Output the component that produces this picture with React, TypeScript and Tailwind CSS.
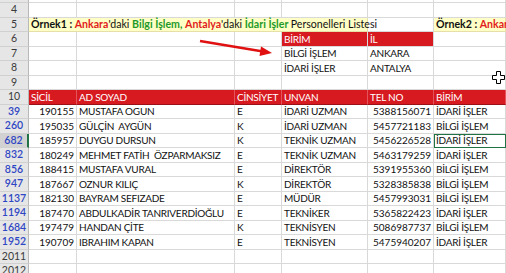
import React from 'react';

// column widths: row header, A..F
const W = ['w-[29px]', 'w-[48px]', 'w-[158px]', 'w-[47px]', 'w-[86px]', 'w-[66px]', 'w-[72px]'];

const people: [number, string, string, string, string, string, string][] = [
  [39, '190155', 'MUSTAFA OGUN', 'E', 'İDARİ UZMAN', '5388156071', 'İDARİ İŞLER'],
  [260, '195035', 'GÜLÇİN  AYGÜN', 'K', 'İDARİ UZMAN', '5457721183', 'BİLGİ İŞLEM'],
  [682, '185957', 'DUYGU DURSUN', 'K', 'TEKNİK UZMAN', '5456226528', 'İDARİ İŞLER'],
  [832, '180249', 'MEHMET FATİH  ÖZPARMAKSIZ', 'E', 'TEKNİK UZMAN', '5463179259', 'İDARİ İŞLER'],
  [856, '188415', 'MUSTAFA VURAL', 'E', 'DİREKTÖR', '5391955360', 'BİLGİ İŞLEM'],
  [947, '187667', 'OZNUR KILIÇ', 'K', 'DİREKTÖR', '5328385838', 'BİLGİ İŞLEM'],
  [1137, '182130', 'BAYRAM SEFIZADE', 'E', 'MÜDÜR', '5457993031', 'BİLGİ İŞLEM'],
  [1194, '187470', 'ABDULKADİR TANRIVERDİOĞLU', 'E', 'TEKNİKER', '5365822423', 'İDARİ İŞLER'],
  [1684, '197479', 'HANDAN ÇİTE', 'K', 'TEKNİSYEN', '5086987737', 'BİLGİ İŞLEM'],
  [1952, '190709', 'IBRAHIM KAPAN', 'E', 'TEKNİSYEN', '5475940207', 'İDARİ İŞLER'],
];

function Row({ tall, children }: { tall?: boolean; children: React.ReactNode }) {
  return <div className={`flex shrink-0 ${tall ? 'h-[15px]' : 'h-[14px]'}`}>{children}</div>;
}

function Head({ n, blue, selected }: { n?: string | number; blue?: boolean; selected?: boolean }) {
  return (
    <div
      className={`${W[0]} shrink-0 flex items-center justify-center border-b border-r box-border text-[10.5px] tracking-normal ${
        selected ? 'bg-[#d2d2d2] border-r-[#217346] border-r-2' : 'bg-[#e6e6e6] border-r-[#b8b8b8]'
      } border-b-[#d0d0d0] ${blue ? 'text-[#2f46c4] font-semibold' : 'text-[#3a3a3a]'}`}
    >
      {n}
    </div>
  );
}

function Cell({ i, children, className = '' }: { i: number; children?: React.ReactNode; className?: string }) {
  return (
    <div
      className={`${W[i]} shrink-0 flex items-center border-b border-r border-[#d9d9d9] box-border px-[2px] whitespace-pre overflow-visible ${className}`}
    >
      {children}
    </div>
  );
}

function Empty() {
  return (
    <>
      {[1, 2, 3, 4, 5, 6].map((i) => (
        <Cell key={i} i={i} />
      ))}
    </>
  );
}

export default function App() {
  return (
    <div className="relative w-[506px] h-[273px] overflow-hidden bg-white text-[10px] tracking-[-0.25px] text-[#111] font-['Lato','Liberation_Sans',sans-serif] flex flex-col">
      <div className="flex shrink-0 h-[3px]">
        <Head />
        <Empty />
      </div>
      <Row tall>
        <Head n={4} />
        <Empty />
      </Row>
      <Row>
        <Head n={5} />
        <div className="w-[339px] shrink-0 flex items-center bg-[#ffffc6] border-b border-r border-[#e6e0a8] box-border px-[2px] whitespace-pre overflow-visible z-10 text-[10.6px] tracking-normal">
          <b>Örnek1 : </b>
          <b className="text-[#e21b1b]">Ankara</b>
          <span>'daki </span>
          <b className="text-[#1f9a2a]">Bilgi İşlem, </b>
          <b className="text-[#e21b1b]">Antalya</b>
          <span>'daki </span>
          <b className="text-[#1f9a2a]">İdari İşler </b>
          <span>Personelleri Listesi</span>
        </div>
        <Cell i={5} />
        <Cell i={6} className="bg-[#ffffc6] border-[#e6e0a8] overflow-hidden text-[10.6px] tracking-normal">
          <b>Örnek2 : </b>
          <b className="text-[#e21b1b]">Ankara</b>
        </Cell>
      </Row>
      <Row tall>
        <Head n={6} />
        <Cell i={1} />
        <Cell i={2} />
        <Cell i={3} />
        <Cell i={4} className="bg-[#d71920] text-white border-[#8e1015]">BİRİM</Cell>
        <Cell i={5} className="bg-[#d71920] text-white border-[#8e1015]">İL</Cell>
        <Cell i={6} />
      </Row>
      <Row>
        <Head n={7} />
        <Cell i={1} />
        <Cell i={2} />
        <Cell i={3} />
        <Cell i={4}>BİLGİ İŞLEM</Cell>
        <Cell i={5}>ANKARA</Cell>
        <Cell i={6} />
      </Row>
      <Row tall>
        <Head n={8} />
        <Cell i={1} />
        <Cell i={2} />
        <Cell i={3} />
        <Cell i={4}>İDARİ İŞLER</Cell>
        <Cell i={5}>ANTALYA</Cell>
        <Cell i={6} />
      </Row>
      <Row>
        <Head n={9} />
        <Empty />
      </Row>
      <Row tall>
        <Head n={10} />
        {['SİCİL', 'AD SOYAD', 'CİNSİYET', 'UNVAN', 'TEL NO', 'BİRİM'].map((t, i) => (
          <Cell key={t} i={i + 1} className="bg-[#d71920] text-white border-b-[#9b1016] border-r-[#e3555a]">
            {t}
          </Cell>
        ))}
      </Row>
      {people.map(([n, sicil, ad, cins, unvan, tel, birim], idx) => (
        <Row key={n} tall={idx % 2 === 1}>
          <Head n={n} blue selected={n === 682} />
          <Cell i={1} className="justify-end tracking-normal">{sicil}</Cell>
          <Cell i={2}>{ad}</Cell>
          <Cell i={3}>{cins}</Cell>
          <Cell i={4}>{unvan}</Cell>
          <Cell i={5} className="justify-end tracking-normal">{tel}</Cell>
          <Cell i={6} className={n === 682 ? 'outline outline-1 outline-[#217346] -outline-offset-1' : ''}>
            {birim}
          </Cell>
        </Row>
      ))}
      <Row>
        <Head n={2011} />
        <Empty />
      </Row>
      <Row tall>
        <Head n={2012} />
        <Empty />
      </Row>

      {/* red arrow pointing to the criteria table */}
      <svg className="absolute left-0 top-0 pointer-events-none" width="506" height="273">
        <line x1="200" y1="41" x2="263" y2="51.5" stroke="#e01010" strokeWidth="2.5" />
        <polygon points="272,53 261,46.5 259.5,56" fill="#e01010" />
      </svg>

      {/* excel cell cursor */}
      <svg className="absolute left-[492px] top-[71px] pointer-events-none" width="13" height="13" viewBox="0 0 13 13">
        <path d="M4.5 0.5h4v4h4v4h-4v4h-4v-4h-4v-4h4z" fill="#fff" stroke="#000" strokeWidth="1" />
      </svg>
    </div>
  );
}
